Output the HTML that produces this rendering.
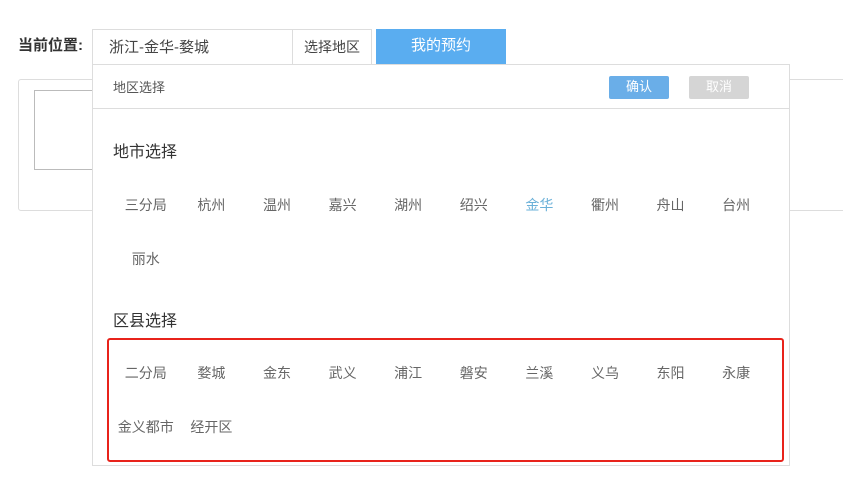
<!DOCTYPE html>
<html><head><meta charset="utf-8"><style>
*{margin:0;padding:0;box-sizing:border-box}
body{width:843px;height:495px;background:#fff;font-family:"Liberation Sans","Noto Sans CJK SC",sans-serif;position:relative;overflow:hidden}
.a{position:absolute}
.lab{left:18px;top:34px;font-size:15px;font-weight:bold;color:#333}
.inp{left:92px;top:29px;width:201px;height:36px;border:1px solid #ddd;font-size:15px;color:#444;padding:6px 0 0 16px}
.sel{left:292px;top:29px;width:80px;height:36px;border:1px solid #ddd;font-size:14px;color:#444;padding:7px 0 0 11px}
.btn{left:376px;top:29px;width:130px;height:36px;background:#5aadf0;color:#fff;font-size:15px;text-align:center;line-height:34px}
.card{left:18px;top:79px;width:840px;height:132px;border:1px solid #ddd;border-radius:3px}
.img{left:34px;top:90px;width:59px;height:80px;border:1px solid #bbb}
.pan{left:92px;top:64px;width:698px;height:402px;border:1px solid #ddd;background:#fff}
.hd{left:0;top:0;width:696px;height:44px;border-bottom:1px solid #ddd}
.hd span{position:absolute;left:20px;top:12px;font-size:13px;color:#555}
.ok,.no{top:11px;width:60px;height:23px;border-radius:2px;color:#fff;font-size:13px;text-align:center;line-height:22px}
.ok{left:516px;background:#6aaee8}.no{left:596px;background:#d5d5d5}
.h{font-size:16px;color:#333;left:20px}
.row{left:20px;width:660px;font-size:14px;color:#666}
.row span{display:inline-block;width:65.6px;text-align:center}
.red{left:14px;top:273px;width:677px;height:124px;border:2px solid #e8231b;border-radius:3px}
</style></head><body>
<div class="a lab">当前位置:</div>
<div class="a card"></div>
<div class="a img"></div>
<div class="a inp">浙江-金华-婺城</div>
<div class="a sel">选择地区</div>
<div class="a btn">我的预约</div>
<div class="a pan">
 <div class="a hd"><span>地区选择</span><div class="a ok">确认</div><div class="a no">取消</div></div>
 <div class="a h" style="top:73px">地市选择</div>
 <div class="a row" style="top:130px"><span>三分局</span><span>杭州</span><span>温州</span><span>嘉兴</span><span>湖州</span><span>绍兴</span><span style="color:#6ab0d8">金华</span><span>衢州</span><span>舟山</span><span>台州</span></div>
 <div class="a row" style="top:184px"><span>丽水</span></div>
 <div class="a h" style="top:242px">区县选择</div>
 <div class="a red"></div>
 <div class="a row" style="top:298px"><span>二分局</span><span>婺城</span><span>金东</span><span>武义</span><span>浦江</span><span>磐安</span><span>兰溪</span><span>义乌</span><span>东阳</span><span>永康</span></div>
 <div class="a row" style="top:352px"><span>金义都市</span><span>经开区</span></div>
</div>
</body></html>
